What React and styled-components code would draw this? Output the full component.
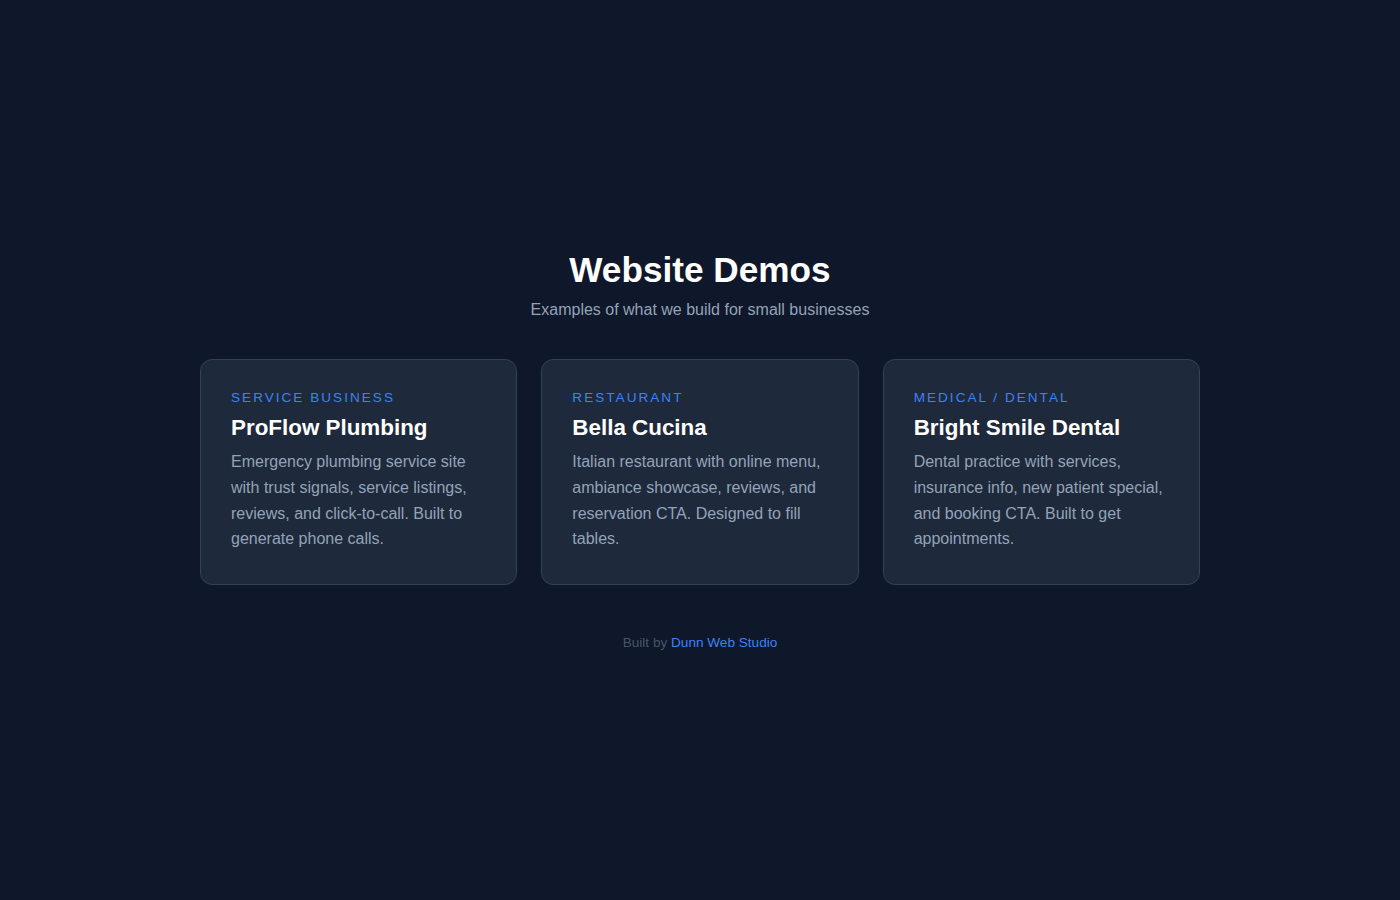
import React from "react";
import styled, { createGlobalStyle } from "styled-components";

const GlobalStyle = createGlobalStyle`
  * { box-sizing: border-box; }
  body {
    margin: 0;
    background: #0f172a;
    font-family: "Liberation Sans", Arial, Helvetica, sans-serif;
    color: #e2e8f0;
  }
`;

const demos = [
  {
    tag: "Service Business",
    name: "ProFlow Plumbing",
    text: "Emergency plumbing service site with trust signals, service listings, reviews, and click-to-call. Built to generate phone calls.",
  },
  {
    tag: "Restaurant",
    name: "Bella Cucina",
    text: "Italian restaurant with online menu, ambiance showcase, reviews, and reservation CTA. Designed to fill tables.",
  },
  {
    tag: "Medical / Dental",
    name: "Bright Smile Dental",
    text: "Dental practice with services, insurance info, new patient special, and booking CTA. Built to get appointments.",
  },
];

const App = () => {
  return (
    <Page>
      <GlobalStyle />
      <Wrap>
        <Title>Website Demos</Title>
        <Subtitle>Examples of what we build for small businesses</Subtitle>
        <Grid>
          {demos.map((demo) => (
            <Card key={demo.name}>
              <Tag>{demo.tag}</Tag>
              <CardTitle>{demo.name}</CardTitle>
              <CardText>{demo.text}</CardText>
            </Card>
          ))}
        </Grid>
        <Footer>
          Built by <FooterLink href="#">Dunn Web Studio</FooterLink>
        </Footer>
      </Wrap>
    </Page>
  );
};

export default App;

const Page = styled.div`
  min-height: 100vh;
  display: flex;
  align-items: center;
  justify-content: center;
`;

const Wrap = styled.div`
  width: 1000px;
  text-align: center;
`;

const Title = styled.h1`
  margin: 0 0 11px;
  font-size: 35.2px;
  font-weight: 700;
  color: #ffffff;
`;

const Subtitle = styled.p`
  margin: 0 0 40px;
  font-size: 16px;
  color: #94a3b8;
`;

const Grid = styled.div`
  display: grid;
  grid-template-columns: repeat(3, 1fr);
  gap: 24px;
  text-align: left;
`;

const Card = styled.div`
  background: #1e293b;
  border: 1px solid #334155;
  border-radius: 12px;
  padding: 30px 30px 32px;
`;

const Tag = styled.div`
  font-size: 13.6px;
  text-transform: uppercase;
  letter-spacing: 2px;
  color: #3b82f6;
  margin-bottom: 10px;
`;

const CardTitle = styled.h3`
  margin: 0 0 8px;
  font-size: 22.4px;
  font-weight: 700;
  color: #ffffff;
`;

const CardText = styled.p`
  margin: 0;
  font-size: 16px;
  line-height: 1.6;
  color: #94a3b8;
`;

const Footer = styled.div`
  margin-top: 50px;
  font-size: 13.6px;
  color: #475569;
`;

const FooterLink = styled.a`
  color: #3b82f6;
  text-decoration: none;
`;
